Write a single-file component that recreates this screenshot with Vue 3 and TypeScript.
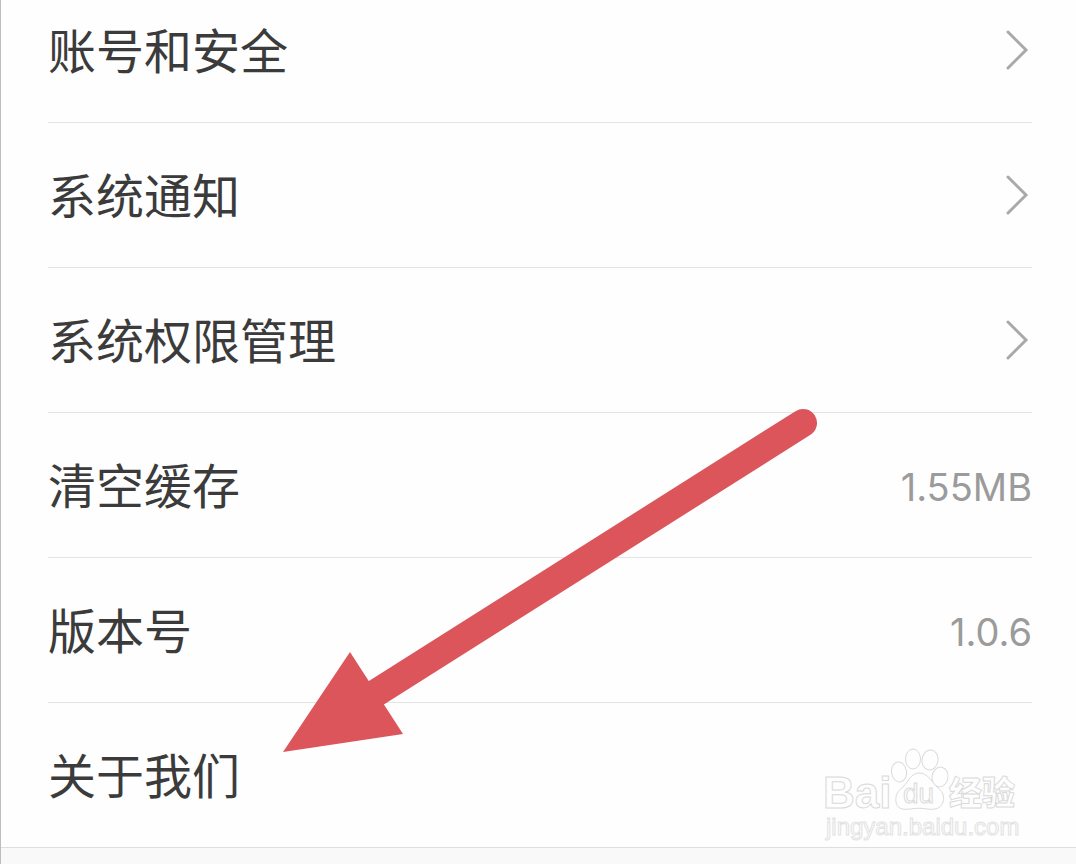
<script setup lang="ts">
interface SettingItem {
  label: string
  value?: string
  arrow?: boolean
}

const items: SettingItem[] = [
  { label: '账号和安全', arrow: true },
  { label: '系统通知', arrow: true },
  { label: '系统权限管理', arrow: true },
  { label: '清空缓存', value: '1.55MB' },
  { label: '版本号', value: '1.0.6' },
  { label: '关于我们' },
]
</script>

<template>
  <main class="page">
    <ul class="list">
      <li v-for="item in items" :key="item.label" class="item">
        <button type="button" class="row">
          <span class="label">{{ item.label }}</span>
          <span v-if="item.value" class="value">{{ item.value }}</span>
          <svg v-if="item.arrow" class="chevron" viewBox="0 0 28 44" aria-hidden="true">
            <path d="M4 4 L22 22 L4 40" />
          </svg>
        </button>
      </li>
    </ul>

    <svg class="pointer" viewBox="0 0 540 350" aria-hidden="true">
      <path class="shaft" d="M524 18 L97 288" />
      <path class="head" d="M4 347 L71 247 L124 329 Z" />
    </svg>

    <svg class="watermark" viewBox="0 0 200 96" role="img" aria-label="Baidu 经验">
      <text class="latin" x="-1" y="60">Bai</text>
      <g class="paw">
        <ellipse cx="75" cy="24" rx="7.5" ry="10" transform="rotate(-8 75 24)" />
        <ellipse cx="89" cy="11" rx="7.5" ry="10" />
        <ellipse cx="106" cy="12" rx="8" ry="10" transform="rotate(8 106 12)" />
        <ellipse cx="116" cy="29" rx="8" ry="10" transform="rotate(10 116 29)" />
        <path d="M95 25 C103 25 107 32 112 38 C118 43 121 47 119 54 C117 61 110 62 103 61 C98 60 92 60 87 61 C79 62 73 61 72 54 C71 47 74 43 79 39 C85 33 87 25 95 25 Z" />
      </g>
      <text class="du" x="79" y="55">du</text>
      <text class="cjk" x="125" y="57">经验</text>
      <text class="site" x="2" y="87">jingyan.baidu.com</text>
    </svg>
  </main>
</template>

<style>
body {
  margin: 0;
  background: #f9f9f9;
}
</style>

<style scoped>
.page {
  position: relative;
  min-height: 100vh;
  box-sizing: border-box;
  overflow: hidden;
  border-left: 1px solid #bdbdbd;
  background: #f9f9f9;
  font-family: Inter, "Noto Sans CJK SC", sans-serif;
}

/* The list is scrolled slightly, so the first row is partly above the top edge. */
.list {
  margin: -22px 0 0;
  padding: 0 44px 0 47px;
  list-style: none;
  background: #fefefe;
  border-bottom: 1px solid #dedede;
}

.item {
  border-bottom: 1px solid #e4e4e4;
}

.item:last-child {
  border-bottom: 0;
}

.row {
  display: flex;
  align-items: center;
  justify-content: space-between;
  width: 100%;
  height: 144px;
  margin: 0;
  padding: 0;
  border: 0;
  background: none;
  color: #3b3b3b;
  font: inherit;
  text-align: left;
  cursor: pointer;
}

.label {
  padding-bottom: 4px;
  font-family: "Noto Sans CJK SC", sans-serif;
  font-size: 48px;
  line-height: 72px;
}

.value {
  padding-top: 4px;
  color: #9b9b9b;
  font-size: 38px;
  line-height: 48px;
}

.chevron {
  width: 28px;
  height: 44px;
}

.chevron path {
  fill: none;
  stroke: #a9a9a9;
  stroke-width: 3;
  stroke-linecap: round;
}

.pointer {
  position: absolute;
  top: 405px;
  left: 278px;
  width: 540px;
  height: 350px;
  pointer-events: none;
}

.shaft {
  fill: none;
  stroke: #db555b;
  stroke-width: 28;
  stroke-linecap: round;
}

.head {
  fill: #db555b;
}

.watermark {
  position: absolute;
  top: 748px;
  right: 52px;
  width: 200px;
  height: 96px;
  overflow: visible;
  pointer-events: none;
}

.paw,
.watermark text {
  fill: #fefefe;
  stroke: #dadada;
  stroke-width: 1;
}

.latin {
  font: 700 44px "Liberation Sans", sans-serif;
}

.du {
  font: 400 28px "Liberation Sans", sans-serif;
}

.cjk {
  font: 900 33px "Noto Sans CJK SC", sans-serif;
}

.watermark .site {
  font: 400 24px "Liberation Sans", sans-serif;
  stroke: #e2e2e2;
}
</style>
